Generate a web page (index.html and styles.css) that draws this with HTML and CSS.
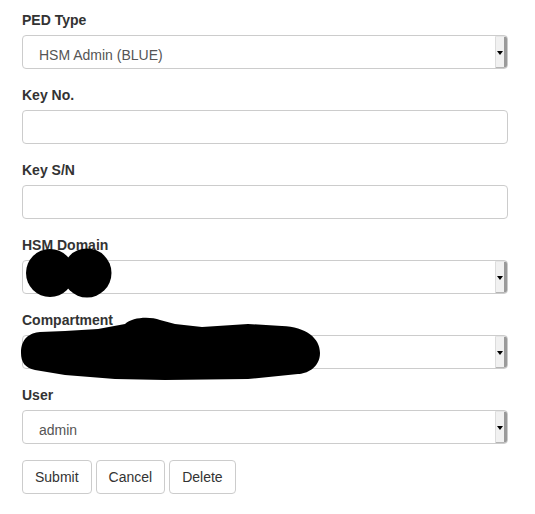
FILE: index.html
```html
<!DOCTYPE html>
<html>
<head>
<meta charset="utf-8">
<link rel="stylesheet" href="styles.css">
</head>
<body>
<form class="form">
  <div class="group">
    <label class="label">PED Type</label>
    <div class="select"><span class="value">HSM Admin (BLUE)</span><span class="arrow"><span class="tri"></span></span></div>
  </div>
  <div class="group">
    <label class="label">Key No.</label>
    <div class="field"></div>
  </div>
  <div class="group">
    <label class="label">Key S/N</label>
    <div class="field"></div>
  </div>
  <div class="group">
    <label class="label">HSM Domain</label>
    <div class="select"><span class="value"></span><span class="arrow"><span class="tri"></span></span></div>
  </div>
  <div class="group">
    <label class="label">Compartment</label>
    <div class="select"><span class="value"></span><span class="arrow"><span class="tri"></span></span></div>
  </div>
  <div class="group">
    <label class="label">User</label>
    <div class="select"><span class="value">admin</span><span class="arrow"><span class="tri"></span></span></div>
  </div>
  <div class="buttons">
    <button type="button" class="btn">Submit</button>
    <button type="button" class="btn">Cancel</button>
    <button type="button" class="btn">Delete</button>
  </div>
</form>
<svg class="redact" width="535" height="514" viewBox="0 0 535 514">
  <circle cx="50" cy="273" r="24"/>
  <circle cx="87" cy="273" r="24.5"/>
  <path d="M21,353 C21,338 30,333 40,332 L65,331 L98,329 L125,324 C132,317 150,316 160,320 L175,324 L202,327 L248,324 L282,326 C306,327 320,338 320,353 C320,368 306,374 298,374 L248,379 L165,380 L115,379 L65,375 L35,370 C25,368 21,362 21,353 Z"/>
</svg>
</body>
</html>
```
FILE: styles.css
```css
html, body {
  margin: 0;
  padding: 0;
  background: #fff;
}
body {
  position: relative;
  width: 535px;
  height: 514px;
  overflow: hidden;
  font-family: "Liberation Sans", Arial, sans-serif;
  font-size: 14px;
  line-height: 20px;
  color: #333;
}
.form {
  padding: 10px 27px 0 22px;
}
.group {
  margin-bottom: 16px;
}
.label {
  display: block;
  font-weight: bold;
  margin-bottom: 5px;
  line-height: 20px;
}
.field,
.select {
  box-sizing: border-box;
  height: 34px;
  border: 1px solid #ccc;
  border-radius: 4px;
  background: #fff;
}
.select {
  display: flex;
}
.value {
  flex: 1;
  padding: 9px 12px 3px 16px;
  color: #555;
  line-height: 20px;
}
.arrow {
  box-sizing: border-box;
  width: 12px;
  background: #f1f1f1;
  border-left: 1px solid #dcdcdc;
  border-right: 3px solid #9a9a9a;
  border-bottom: 1px solid #b5b5b5;
  border-top: 1px solid #e6e6e6;
  border-radius: 0 3px 3px 0;
  display: flex;
  align-items: center;
  justify-content: center;
}
.tri {
  width: 0;
  height: 0;
  border-left: 3px solid transparent;
  border-right: 3px solid transparent;
  border-top: 4px solid #000;
  margin-top: 1px;
}
.buttons {
  display: flex;
  gap: 4px;
}
.btn {
  font-family: "Liberation Sans", Arial, sans-serif;
  font-size: 14px;
  line-height: 20px;
  color: #333;
  background: #fff;
  border: 1px solid #ccc;
  border-radius: 4px;
  padding: 6px 12px;
  margin: 0;
}
.redact {
  position: absolute;
  left: 0;
  top: 0;
  fill: #000;
  pointer-events: none;
}
```
